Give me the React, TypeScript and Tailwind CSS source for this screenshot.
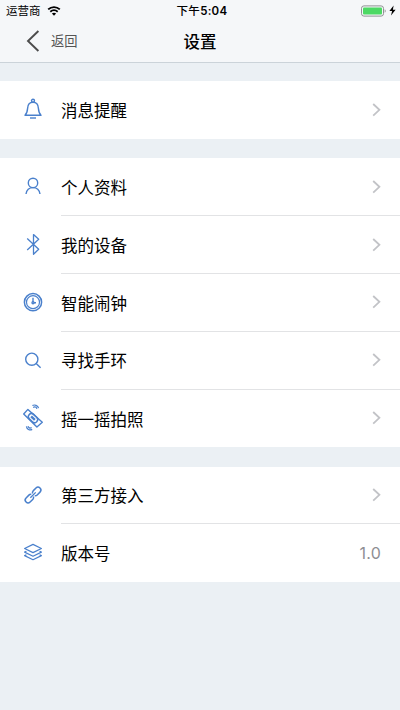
import React from 'react'

const BellIcon = () => (
  <>
    <circle cx="12" cy="2.8" r="1.5" />
    <path d="M4 17.2C6.2 15.2 6.4 13.4 6.6 10.4C6.8 6.4 8.8 4.3 12 4.3C15.2 4.3 17.2 6.4 17.4 10.4C17.6 13.4 17.8 15.2 20 17.2Z" />
    <path d="M9 20H15" />
  </>
)

const UserIcon = () => (
  <>
    <circle cx="12" cy="7.9" r="4.7" />
    <path d="M5 19C5.6 15 8.2 12.6 12 12.6C15.8 12.6 18.4 15 19 19" />
  </>
)

const BluetoothIcon = () => (
  <path
    strokeWidth="1.3"
    d="M6.2 5.6L17.7 16.3L12.5 21.2V1.6L17.7 6.3L6.2 16.9"
  />
)

const ClockIcon = () => (
  <>
    <circle cx="12" cy="11.2" r="8.6" strokeWidth="1.5" />
    <circle cx="12" cy="11.2" r="6.5" strokeWidth="1.2" />
    <circle cx="12" cy="11.8" r="1" strokeWidth="1.4" />
    <path d="M12 6.8V11M13 11.8H15" strokeWidth="1.4" />
  </>
)

const SearchIcon = () => (
  <>
    <circle cx="10.8" cy="10.2" r="6.1" />
    <path d="M15.2 14.6L19.6 18.8" />
  </>
)

const ShakeIcon = () => (
  <>
    <path d="M6.9 3.4L21.3 16.3L15.9 21L2.7 8Z" />
    <g transform="rotate(44 12 12.1)">
      <rect x="6.8" y="9" width="10.4" height="6.2" rx="3.1" strokeWidth="1.5" />
      <path d="M9.4 12.1H14.6" strokeWidth="2.4" />
    </g>
    <path d="M11.4 -0.4C13.6 -1.8 16.8 -0.6 17.6 2.2" strokeWidth="1.2" />
    <path d="M12.2 1.4C13.8 0.4 15.4 1 15.9 2.8" strokeWidth="1.2" />
    <path d="M5.4 20.4C5.8 23.2 8.6 24.8 11.2 23.4" strokeWidth="1.2" />
    <path d="M7 20.2C7.4 21.8 9 22.6 10.6 21.6" strokeWidth="1.2" />
  </>
)

const LinkIcon = () => (
  <g transform="rotate(-45 12 11)" strokeWidth="1.5">
    <path d="M11.2 12.4A2.6 2.6 0 0 1 9 13.9H5A2.8 2.8 0 0 1 5 8.2H9A2.6 2.6 0 0 1 11.2 9.4" />
    <path d="M12.8 9.6A2.6 2.6 0 0 1 15 8.2H19A2.8 2.8 0 0 1 19 13.9H15A2.6 2.6 0 0 1 12.8 12.7" />
    <path d="M8.2 11.05H15.8" strokeWidth="1.3" />
  </g>
)

const LayersIcon = () => (
  <>
    <path d="M12 3.4L20.4 7.5L12 11.6L3.6 7.5Z" strokeWidth="1.2" />
    <path
      d="M5.4 10.2L3.6 11.1L12 15.2L20.4 11.1L18.6 10.2"
      strokeWidth="1.2"
    />
    <path
      d="M5.4 13.7L3.6 14.6L12 18.7L20.4 14.6L18.6 13.7"
      strokeWidth="1.2"
    />
  </>
)

type Item = {
  label: string
  icon: React.ReactNode
  value?: string
}

const sections: Item[][] = [
  [{ label: '消息提醒', icon: <BellIcon /> }],
  [
    { label: '个人资料', icon: <UserIcon /> },
    { label: '我的设备', icon: <BluetoothIcon /> },
    { label: '智能闹钟', icon: <ClockIcon /> },
    { label: '寻找手环', icon: <SearchIcon /> },
    { label: '摇一摇拍照', icon: <ShakeIcon /> },
  ],
  [
    { label: '第三方接入', icon: <LinkIcon /> },
    { label: '版本号', icon: <LayersIcon />, value: '1.0' },
  ],
]

const StatusBar = () => (
  <div className="grid h-5 grid-cols-3 items-center pl-1.5 pr-1 text-[11.5px] leading-5 text-black">
    <div className="flex items-center gap-[6px]">
      <span className="pt-px">运营商</span>
      <svg width="14" height="10" viewBox="0 0 13 10" fill="none" stroke="#000">
        <path d="M0.7 3.4C4 0.3 9 0.3 12.3 3.4" strokeWidth="1.9" />
        <path d="M2.8 5.7C5 3.8 8 3.8 10.2 5.7" strokeWidth="1.8" />
        <path d="M6.5 9.7L4.4 7.6C5.6 6.6 7.4 6.6 8.6 7.6Z" fill="#000" stroke="none" />
      </svg>
    </div>
    <div className="pl-0.5 text-center font-medium tracking-[0.3px] whitespace-nowrap">
      下午<span className="font-semibold">5:04</span>
    </div>
    <div className="flex items-center justify-end gap-[3px]">
      <svg width="25" height="12" viewBox="0 0 25 12" fill="none">
        <rect x="0.5" y="0.9" width="22" height="10.2" rx="2.4" stroke="#8f9193" />
        <rect x="2" y="2.4" width="19" height="7.2" rx="1" fill="#4cd964" />
        <path d="M23.7 4.2C25 4.8 25 7.2 23.7 7.8Z" fill="#8f9193" />
      </svg>
      <svg width="7" height="11" viewBox="0 0 7 11" fill="#000">
        <path d="M4.6 0.6L0.4 6H3.1L2 10.4L6.6 4.8H3.9Z" />
      </svg>
    </div>
  </div>
)

const SettingRow = ({ item, last }: { item: Item; last: boolean }) => (
  <div className="flex h-[57.8px] items-center pl-[21px]">
    <svg
      width="24"
      height="24"
      viewBox="0 0 24 24"
      fill="none"
      stroke="#4a80cc"
      strokeWidth="1.4"
      strokeLinejoin="round"
      className="shrink-0 overflow-visible"
    >
      {item.icon}
    </svg>
    <div
      className={`ml-4 flex h-full flex-1 items-center justify-between pr-[19px] ${
        last ? '' : 'border-b border-[#e2e3e5]'
      }`}
    >
      <span className="pt-[3px] text-[16.5px] text-black">{item.label}</span>
      {item.value ? (
        <span className="text-[16px] tracking-[0.2px] text-[#8e8e93]">
          {item.value}
        </span>
      ) : (
        <svg width="9" height="14" viewBox="0 0 9 14" fill="none" stroke="#c2c3c7" strokeWidth="1.8">
          <path d="M1.2 1L7.4 6.8L1.2 12.6" />
        </svg>
      )}
    </div>
  </div>
)

const App = () => {
  return (
    <div className="min-h-screen bg-[#ebf0f4] font-['Inter','Noto_Sans_CJK_SC',sans-serif]">
      <header className="h-[63px] border-b border-[#cbd3d9] bg-[#f5f7f9]">
        <StatusBar />
        <div className="grid h-[42px] grid-cols-3 items-center">
          <div className="flex items-center gap-[11px] pl-[26px] text-[#555]">
            <svg width="14" height="22" viewBox="0 0 14 22" fill="none" stroke="#4c4c4c" strokeWidth="1.9">
              <path d="M12.4 1L2 11L12.4 21" />
            </svg>
            <span className="pt-0.5 text-[13.3px]">返回</span>
          </div>
          <h1 className="pt-0.5 text-center text-[16.5px] font-medium text-black">
            设置
          </h1>
        </div>
      </header>
      <main className="flex flex-col gap-[19.3px] pt-[18.3px]">
        {sections.map((items, i) => (
          <section key={i} className="bg-white">
            {items.map((item, j) => (
              <SettingRow
                key={item.label}
                item={item}
                last={j === items.length - 1}
              />
            ))}
          </section>
        ))}
      </main>
    </div>
  )
}

export default App
